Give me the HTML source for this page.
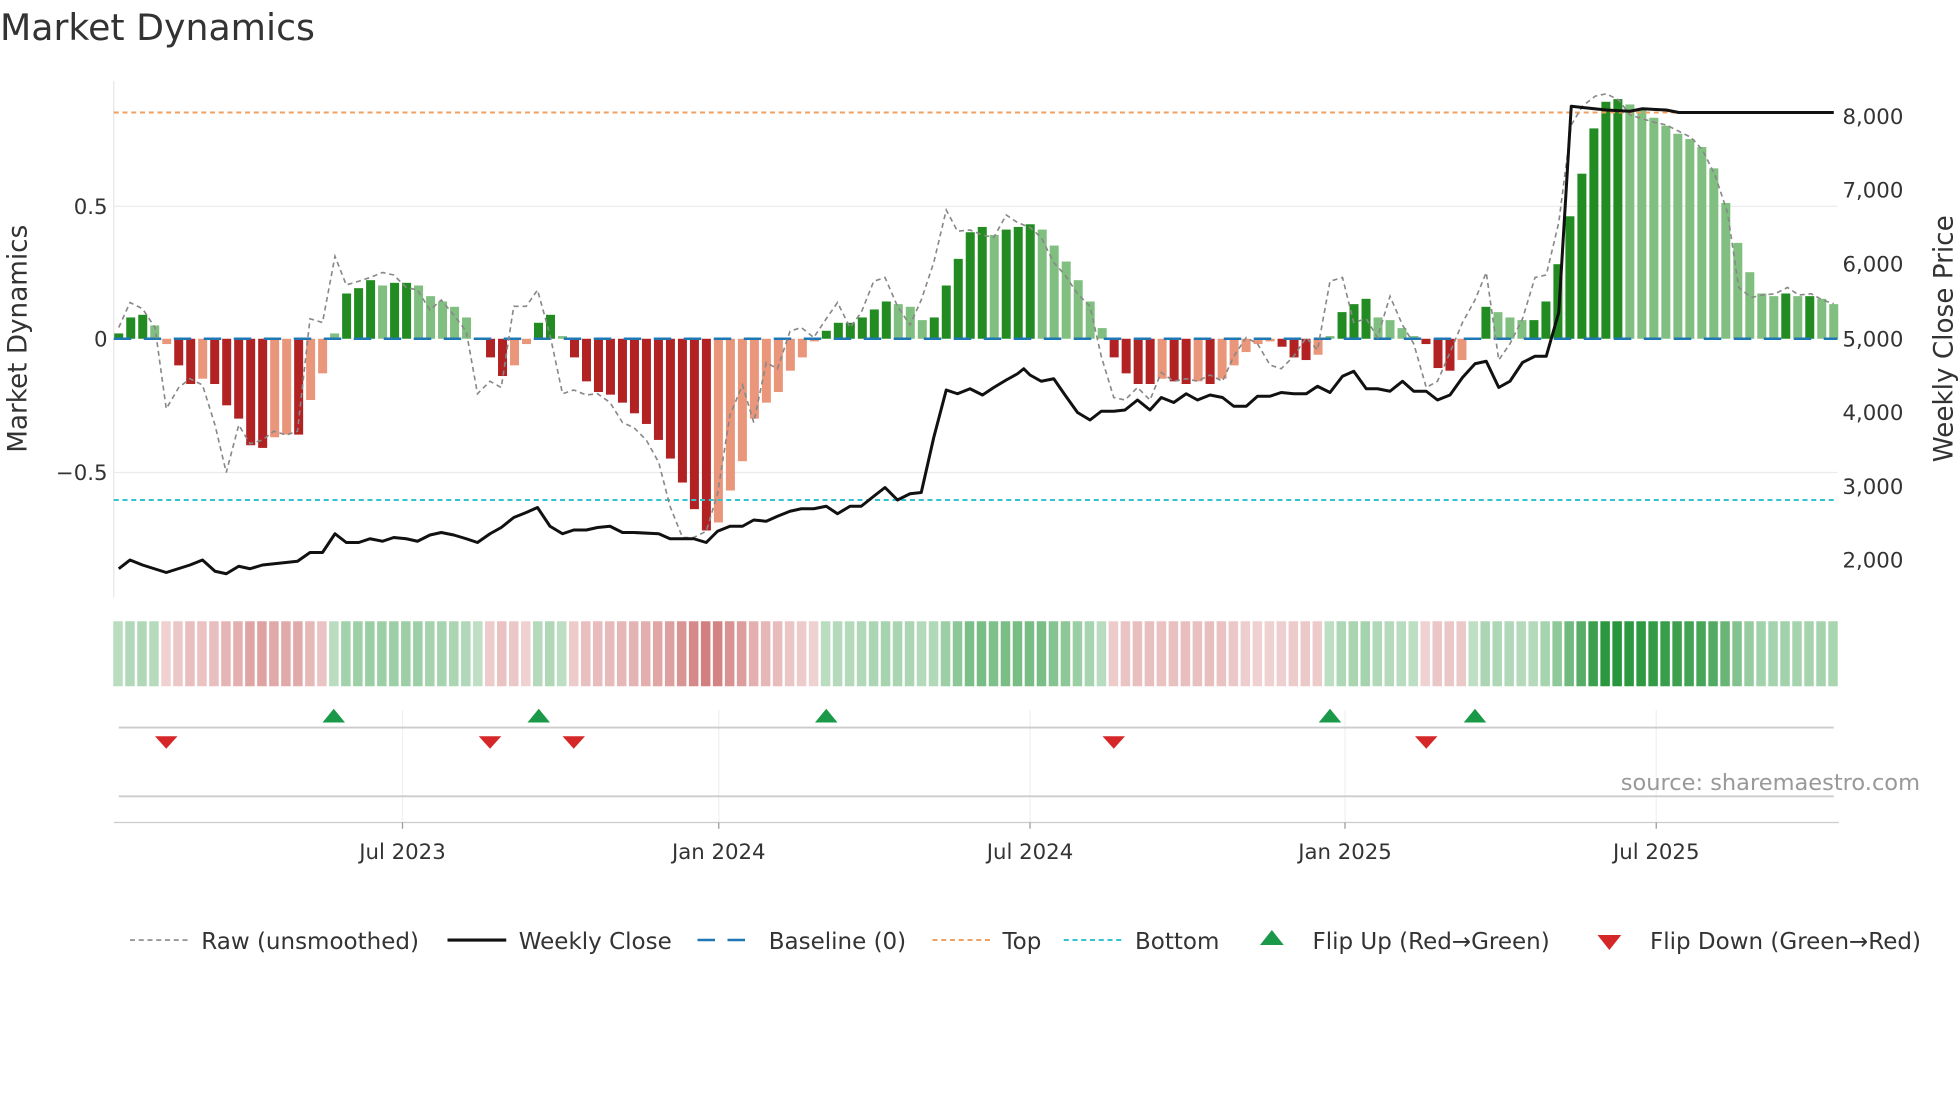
<!DOCTYPE html>
<html><head><meta charset="utf-8"><style>
html,body{margin:0;padding:0;background:#fff;}
svg{display:block;font-family:"DejaVu Sans","Liberation Sans",sans-serif;}
</style></head><body>
<svg id="s" width="1960" height="1102" viewBox="0 0 1568 881.6" xmlns="http://www.w3.org/2000/svg">
<rect width="1568" height="882" fill="#fff"/>
<text x="0" y="32" font-size="29" fill="#333">Market Dynamics</text>
<g stroke="#ebebeb" stroke-width="1">
<line x1="91" y1="165" x2="1470" y2="165"/>
<line x1="91" y1="378" x2="1470" y2="378"/>
</g>
<line x1="91" y1="65" x2="91" y2="478" stroke="#e6e6e6"/>
<g id="bars"></g>
<line x1="91" y1="271" x2="1470" y2="271" stroke="#1f77b4" stroke-width="2" stroke-dasharray="14,10"/>
<line x1="91" y1="90" x2="1470" y2="90" stroke="#f0a060" stroke-width="1.6" stroke-dasharray="4,3"/>
<line x1="91" y1="400" x2="1470" y2="400" stroke="#30c4d0" stroke-width="1.6" stroke-dasharray="4,3"/>
<polyline id="raw" fill="none" stroke="#888" stroke-width="1.3" stroke-dasharray="4,3"/>
<polyline id="close" fill="none" stroke="#111" stroke-width="2.4" stroke-linejoin="round"/>
<g font-size="17" fill="#333">
<text x="86" y="171" text-anchor="end">0.5</text>
<text x="86" y="277" text-anchor="end">0</text>
<text x="86" y="384" text-anchor="end">−0.5</text>
<text x="1474" y="99">8,000</text>
<text x="1474" y="158">7,000</text>
<text x="1474" y="217">6,000</text>
<text x="1474" y="277">5,000</text>
<text x="1474" y="336">4,000</text>
<text x="1474" y="395">3,000</text>
<text x="1474" y="454">2,000</text>
</g>
<text transform="translate(21,271) rotate(-90)" font-size="21" fill="#333" text-anchor="middle">Market Dynamics</text>
<text transform="translate(1562,271) rotate(-90)" font-size="21" fill="#333" text-anchor="middle">Weekly Close Price</text>
<g id="heat"></g>
<g stroke="#eef0f2" stroke-width="1">
<line x1="322" y1="568" x2="322" y2="658"/><line x1="575" y1="568" x2="575" y2="658"/><line x1="824" y1="568" x2="824" y2="658"/><line x1="1076" y1="568" x2="1076" y2="658"/><line x1="1325" y1="568" x2="1325" y2="658"/>
</g>
<line x1="95" y1="582" x2="1467" y2="582" stroke="#ccc" stroke-width="1.5"/>
<line x1="95" y1="637" x2="1467" y2="637" stroke="#ccc" stroke-width="1.5"/>
<line x1="91" y1="658" x2="1471" y2="658" stroke="#ccc" stroke-width="1"/>
<g stroke="#999"><line x1="322" y1="658" x2="322" y2="663"/><line x1="575" y1="658" x2="575" y2="663"/><line x1="824" y1="658" x2="824" y2="663"/><line x1="1076" y1="658" x2="1076" y2="663"/><line x1="1325" y1="658" x2="1325" y2="663"/></g>
<g id="flips"></g>
<text x="1536" y="632" font-size="18" fill="#999" text-anchor="end">source: sharemaestro.com</text>
<g font-size="17" fill="#333" text-anchor="middle">
<text x="322" y="687">Jul 2023</text><text x="575" y="687">Jan 2024</text><text x="824" y="687">Jul 2024</text><text x="1076" y="687">Jan 2025</text><text x="1325" y="687">Jul 2025</text>
</g>
<g font-size="18.4" fill="#333">
<line x1="104" y1="752" x2="150" y2="752" stroke="#888" stroke-width="1.3" stroke-dasharray="4,3"/>
<text x="161" y="759">Raw (unsmoothed)</text>
<line x1="358" y1="752" x2="405" y2="752" stroke="#111" stroke-width="2.5"/>
<text x="415" y="759">Weekly Close</text>
<line x1="558" y1="752" x2="604" y2="752" stroke="#1f77b4" stroke-width="2" stroke-dasharray="14,10"/>
<text x="615" y="759">Baseline (0)</text>
<line x1="746" y1="752" x2="792" y2="752" stroke="#f0a060" stroke-width="1.6" stroke-dasharray="4,3"/>
<text x="802" y="759">Top</text>
<line x1="851" y1="752" x2="897" y2="752" stroke="#30c4d0" stroke-width="1.6" stroke-dasharray="4,3"/>
<text x="908" y="759">Bottom</text>
<polygon points="1008,756 1027,756 1017.5,744" fill="#1a9a48"/>
<text x="1050" y="759">Flip Up (Red→Green)</text>
<polygon points="1278,748 1297,748 1287.5,760" fill="#d62728"/>
<text x="1320" y="759">Flip Down (Green→Red)</text>
</g>
</svg>
<script>
var v=[0.02,0.08,0.09,0.05,-0.02,-0.1,-0.17,-0.15,-0.17,-0.25,-0.3,-0.4,-0.41,-0.37,-0.36,-0.36,-0.23,-0.13,0.02,0.17,0.19,0.22,0.2,0.21,0.21,0.2,0.16,0.14,0.12,0.08,0.0,-0.07,-0.14,-0.1,-0.02,0.06,0.09,0.01,-0.07,-0.16,-0.2,-0.21,-0.24,-0.28,-0.32,-0.38,-0.45,-0.54,-0.64,-0.72,-0.69,-0.57,-0.46,-0.3,-0.24,-0.2,-0.12,-0.07,-0.01,0.03,0.06,0.06,0.08,0.11,0.14,0.13,0.12,0.07,0.08,0.2,0.3,0.4,0.42,0.39,0.41,0.42,0.43,0.41,0.35,0.29,0.22,0.14,0.04,-0.07,-0.13,-0.17,-0.17,-0.15,-0.16,-0.17,-0.16,-0.17,-0.15,-0.1,-0.05,-0.02,-0.01,-0.03,-0.07,-0.08,-0.06,0.01,0.1,0.13,0.15,0.08,0.07,0.04,0.01,-0.02,-0.11,-0.12,-0.08,0.0,0.12,0.1,0.08,0.07,0.07,0.14,0.28,0.46,0.62,0.79,0.89,0.9,0.88,0.86,0.83,0.8,0.77,0.75,0.72,0.64,0.51,0.36,0.25,0.17,0.16,0.17,0.16,0.16,0.15,0.13];
var n=v.length,x0=95,x1=1467,dx=(x1-x0)/(n-1),ns="http://www.w3.org/2000/svg";
function el(t,a,p){var e=document.createElementNS(ns,t);for(var k in a)e.setAttribute(k,a[k]);document.getElementById(p).appendChild(e);}
for(var i=0;i<n;i++){var x=x0+i*dx,val=v[i],y=271-val*213,dark=i==0||Math.abs(val)>=Math.abs(v[i-1]);
var c=val>=0?(dark?"#228b22":"#80bf80"):(dark?"#b22222":"#e9967a");
el("rect",{x:x-3.6,y:Math.min(y,271),width:7.2,height:Math.abs(y-271),fill:c},"bars");
var a=0.3+0.7*Math.min(Math.abs(val)/0.9,1);
var hc=val>=0?"rgba(40,150,60,"+a.toFixed(2)+")":"rgba(190,70,70,"+(a*0.8).toFixed(2)+")";
el("rect",{x:x-4.4,y:497,width:7.6,height:52,fill:hc},"heat");}
var raw=[[95,262],[104,242],[114,247],[124,262],[133,327],[143,310],[152,303],[162,308],[172,340],[181,378],[191,340],[200,355],[210,352],[219,345],[229,348],[238,345],[248,255],[258,258],[268,205],[277,228],[287,225],[296,222],[306,218],[315,220],[325,230],[334,232],[344,248],[353,240],[363,252],[373,265],[382,315],[392,305],[401,310],[411,245],[421,245],[430,232],[440,268],[450,315],[459,312],[469,316],[478,315],[488,322],[498,338],[507,342],[517,352],[527,370],[536,405],[546,430],[555,430],[565,425],[574,395],[584,332],[594,308],[603,338],[613,290],[622,295],[632,265],[641,262],[651,270],[661,255],[670,242],[680,262],[689,250],[699,225],[708,222],[718,245],[728,260],[737,240],[747,210],[757,168],[766,185],[776,184],[786,188],[795,190],[805,172],[814,178],[824,182],[833,190],[843,210],[852,220],[862,235],[872,245],[881,285],[891,318],[900,320],[910,310],[920,320],[929,298],[939,305],[949,303],[958,305],[968,300],[978,305],[987,285],[997,270],[1006,275],[1016,292],[1025,295],[1035,285],[1045,270],[1054,280],[1064,225],[1074,222],[1083,258],[1093,255],[1102,270],[1112,237],[1122,260],[1131,275],[1141,310],[1150,305],[1160,282],[1170,258],[1180,240],[1189,218],[1199,288],[1208,275],[1218,255],[1228,222],[1237,220],[1247,178],[1257,100],[1266,85],[1276,77],[1285,75],[1295,80],[1304,92],[1314,95],[1324,98],[1333,100],[1343,105],[1353,110],[1362,120],[1372,140],[1382,170],[1391,230],[1401,238],[1410,236],[1420,235],[1430,230],[1439,236],[1449,235],[1458,240],[1467,243]];
document.getElementById("raw").setAttribute("points",raw.join(" "));
var cl=[[95,455],[104,448],[114,452],[133,458],[152,452],[162,448],[172,457],[181,459],[191,453],[200,455],[210,452],[238,449],[248,442],[258,442],[268,427],[277,434],[287,434],[296,431],[306,433],[315,430],[325,431],[334,433],[344,428],[353,426],[363,428],[373,431],[382,434],[392,427],[401,422],[411,414],[421,410],[430,406],[440,421],[450,427],[459,424],[469,424],[478,422],[488,421],[498,426],[507,426],[527,427],[536,431],[546,431],[555,431],[565,434],[574,425],[584,421],[594,421],[603,416],[613,417],[622,413],[632,409],[641,407],[651,407],[661,405],[670,411],[680,405],[689,405],[699,397],[708,390],[718,400],[728,395],[737,394],[747,350],[757,312],[766,315],[776,311],[786,316],[795,310],[805,304],[814,299],[819,295],[824,300],[833,305],[843,303],[852,316],[862,330],[872,336],[881,329],[891,329],[900,328],[910,320],[920,328],[929,318],[939,322],[949,315],[958,320],[968,316],[978,318],[987,325],[997,325],[1006,317],[1016,317],[1025,314],[1035,315],[1045,315],[1054,309],[1064,314],[1074,301],[1083,297],[1093,311],[1102,311],[1112,313],[1122,305],[1131,313],[1141,313],[1150,320],[1160,316],[1170,302],[1180,291],[1189,289],[1199,310],[1208,305],[1218,290],[1228,285],[1237,285],[1247,250],[1257,85],[1266,86],[1285,88],[1304,89],[1314,87],[1333,88],[1343,90],[1467,90]];
document.getElementById("close").setAttribute("points",cl.join(" "));
[267,431,661,1064,1180].forEach(function(x){el("polygon",{points:(x-9)+",578 "+(x+9)+",578 "+x+",567",fill:"#1a9a48"},"flips");});
[133,392,459,891,1141].forEach(function(x){el("polygon",{points:(x-9)+",589 "+(x+9)+",589 "+x+",599",fill:"#d62728"},"flips");});
</script>
</body></html>
